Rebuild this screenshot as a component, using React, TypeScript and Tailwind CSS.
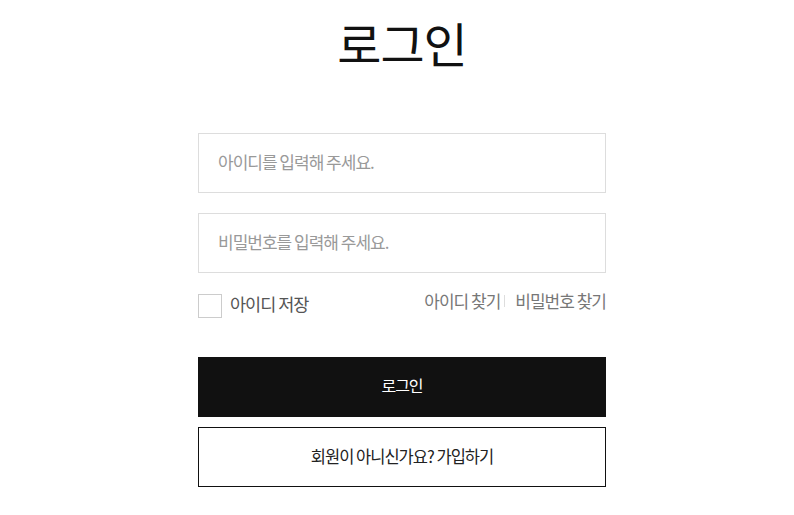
export default function App() {
  const font = { fontFamily: '"Noto Sans CJK KR", "Noto Sans", sans-serif' };
  return (
    <div className="w-[794px] h-[515px] bg-white flex flex-col items-center pl-[10px]" style={font}>
      <h1 className="mt-[11px] h-[62px] leading-[62px] text-[48px] font-normal text-[#111] tracking-[-1px]">로그인</h1>
      <div className="w-[408px] mt-[60px] flex flex-col">
        <div className="h-[60px] border border-[#dddddd] flex items-center px-[19px]">
          <span className="text-[17px] text-[#999] tracking-[-1px] -mt-[3px]">아이디를 입력해 주세요.</span>
        </div>
        <div className="h-[60px] mt-[20px] border border-[#dddddd] flex items-center px-[19px]">
          <span className="text-[17px] text-[#999] tracking-[-1px] -mt-[3px]">비밀번호를 입력해 주세요.</span>
        </div>
        <div className="mt-[20px] h-[25px] flex items-center justify-between">
          <div className="flex items-center gap-[8px]">
            <div className="w-[24px] h-[24px] border border-[#cccccc] bg-white" />
            <span className="text-[17.5px] text-[#555] tracking-[-1px] -mt-[3px]">아이디 저장</span>
          </div>
          <div className="flex items-center text-[17px] text-[#777] tracking-[-1px] -mt-[9px]">
            <span>아이디 찾기</span>
            <span className="ml-[4px] mr-[10px] w-px h-[12px] bg-[#dddddd]" />
            <span>비밀번호 찾기</span>
          </div>
        </div>
        <button className="mt-[39px] h-[60px] bg-[#111111] text-white text-[16px] tracking-[-1px] pb-[4px]">로그인</button>
        <button className="mt-[10px] h-[60px] border border-[#111111] bg-white text-[#222] text-[16.5px] tracking-[-1px] pb-[2px]">회원이 아니신가요? 가입하기</button>
      </div>
    </div>
  );
}
